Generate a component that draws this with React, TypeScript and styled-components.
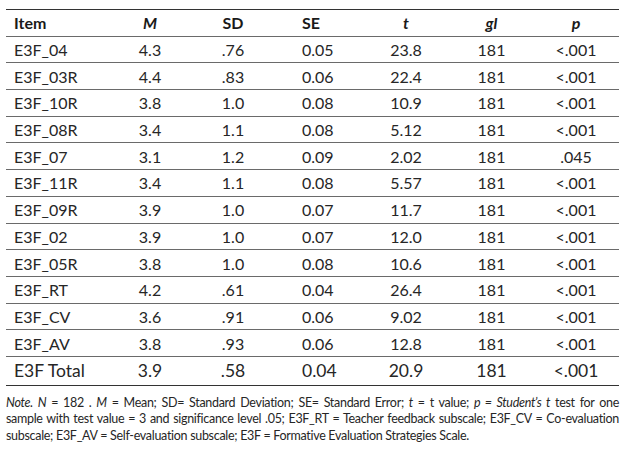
import React from "react";
import styled, { createGlobalStyle } from "styled-components";

const Global = createGlobalStyle`
  html, body { margin: 0; padding: 0; background: #fff; }
  body { font-family: Lato, "Open Sans", sans-serif; color: #262626; }
`;

const Page = styled.div`
  width: 625px;
  height: 456px;
  padding: 9px 6px 0 6px;
  box-sizing: border-box;
`;

const Table = styled.div`
  display: grid;
  grid-template-columns: 104px 80px 86px 80px 100px 71px 92px;
  border-top: 1.5px solid #333;
  border-bottom: 1.5px solid #333;
`;

type CellProps = { $align: "left" | "center"; $pad: number; $head?: boolean; $big?: boolean; $last?: boolean };

const Cell = styled.div<CellProps>`
  display: flex;
  align-items: center;
  justify-content: ${(p) => (p.$align === "left" ? "flex-start" : "center")};
  padding-left: ${(p) => p.$pad}px;
  height: ${(p) => (p.$big ? 28 : 26.7)}px;
  box-sizing: border-box;
  font-size: ${(p) => (p.$big ? 17.5 : 16)}px;
  font-weight: ${(p) => (p.$head ? 700 : 400)};
  color: ${(p) => (p.$head ? "#1a1a1a" : "#262626")};
  border-bottom: ${(p) => (p.$last ? "none" : "1.5px solid #6a6a6a")};
`;

const Ital = styled.i`
  font-style: italic;
`;

const Note = styled.div`
  margin-top: 9px;
  display: flex;
  flex-direction: column;
  font-size: 12.5px;
  letter-spacing: -0.3px;
  line-height: 16.5px;
  color: #262626;
`;

const NoteLine = styled.div<{ $justify?: boolean }>`
  white-space: nowrap;
  text-align: ${(p) => (p.$justify ? "justify" : "left")};
  text-align-last: ${(p) => (p.$justify ? "justify" : "left")};
`;

const cols: { align: "left" | "center"; pad: number }[] = [
  { align: "left", pad: 8 },
  { align: "center", pad: 0 },
  { align: "center", pad: 0 },
  { align: "left", pad: 26 },
  { align: "center", pad: 0 },
  { align: "center", pad: 0 },
  { align: "center", pad: 6 },
];

const header: React.ReactNode[] = [
  "Item",
  <Ital key="m">M</Ital>,
  "SD",
  "SE",
  <Ital key="t">t</Ital>,
  <Ital key="gl">gl</Ital>,
  <Ital key="p">p</Ital>,
];

const rows: string[][] = [
  ["E3F_04", "4.3", ".76", "0.05", "23.8", "181", "<.001"],
  ["E3F_03R", "4.4", ".83", "0.06", "22.4", "181", "<.001"],
  ["E3F_10R", "3.8", "1.0", "0.08", "10.9", "181", "<.001"],
  ["E3F_08R", "3.4", "1.1", "0.08", "5.12", "181", "<.001"],
  ["E3F_07", "3.1", "1.2", "0.09", "2.02", "181", ".045"],
  ["E3F_11R", "3.4", "1.1", "0.08", "5.57", "181", "<.001"],
  ["E3F_09R", "3.9", "1.0", "0.07", "11.7", "181", "<.001"],
  ["E3F_02", "3.9", "1.0", "0.07", "12.0", "181", "<.001"],
  ["E3F_05R", "3.8", "1.0", "0.08", "10.6", "181", "<.001"],
  ["E3F_RT", "4.2", ".61", "0.04", "26.4", "181", "<.001"],
  ["E3F_CV", "3.6", ".91", "0.06", "9.02", "181", "<.001"],
  ["E3F_AV", "3.8", ".93", "0.06", "12.8", "181", "<.001"],
  ["E3F Total", "3.9", ".58", "0.04", "20.9", "181", "<.001"],
];

export default function App() {
  return (
    <>
      <Global />
      <Page>
        <Table>
          {header.map((h, i) => (
            <Cell key={"h" + i} $align={cols[i].align} $pad={cols[i].pad} $head>
              {h}
            </Cell>
          ))}
          {rows.map((r, ri) =>
            r.map((v, ci) => (
              <Cell
                key={ri + "-" + ci}
                $align={cols[ci].align}
                $pad={cols[ci].pad}
                $big={ri === rows.length - 1}
                $last={ri === rows.length - 1}
              >
                {v}
              </Cell>
            ))
          )}
        </Table>
        <Note>
          <NoteLine $justify>
            <Ital>Note.</Ital> <Ital>N</Ital> = 182 . <Ital>M</Ital> = Mean; SD= Standard Deviation; SE= Standard
            Error; <Ital>t</Ital> = t value; <Ital>p = Student’s t</Ital> test for one
          </NoteLine>
          <NoteLine $justify>
            sample with test value = 3 and significance level .05; E3F_RT = Teacher feedback subscale; E3F_CV =
            Co-evaluation
          </NoteLine>
          <NoteLine>subscale; E3F_AV = Self-evaluation subscale; E3F = Formative Evaluation Strategies Scale.</NoteLine>
        </Note>
      </Page>
    </>
  );
}
